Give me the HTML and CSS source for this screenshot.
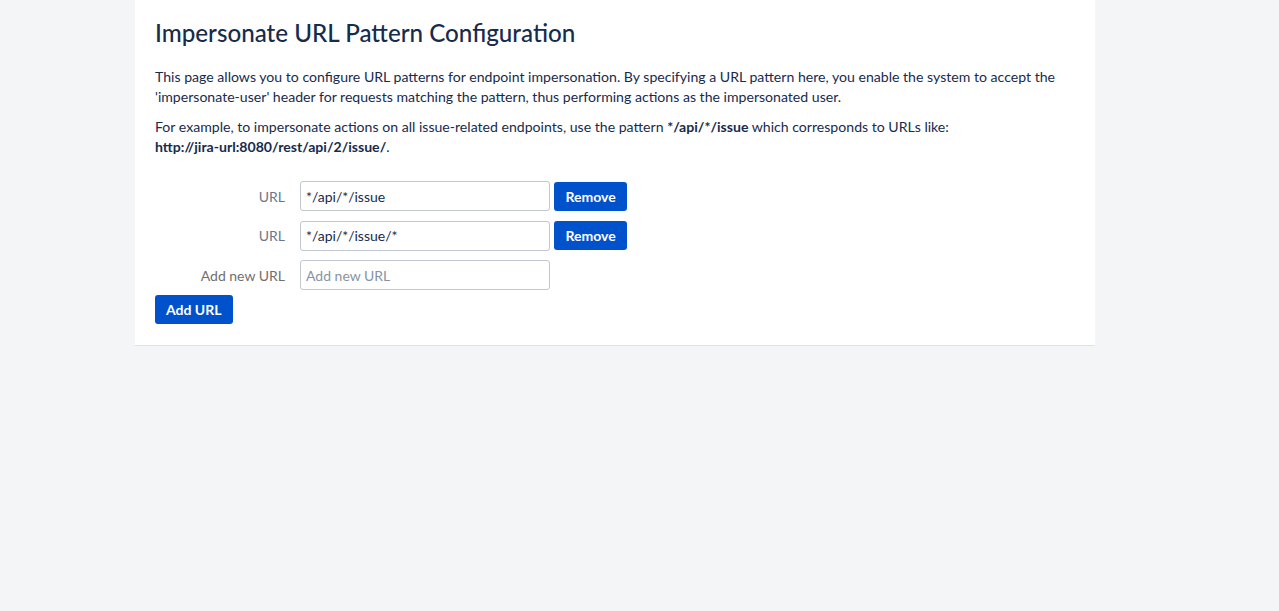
FILE: index.html
```html
<!DOCTYPE html>
<html lang="en">
<head>
<meta charset="utf-8">
<title>Impersonate URL Pattern Configuration</title>
<link rel="stylesheet" href="styles.css">
</head>
<body>
<div class="page">
  <main class="panel">
    <h1 class="title">Impersonate URL Pattern Configuration</h1>
    <p class="desc">This page allows you to configure URL patterns for endpoint impersonation. By specifying a URL pattern here, you enable the system to accept the 'impersonate-user' header for requests matching the pattern, thus performing actions as the impersonated user.</p>
    <p class="desc">For example, to impersonate actions on all issue-related endpoints, use the pattern <strong>*/api/*/issue</strong> which corresponds to URLs like: <strong class="nowrap">http://jira-url:8080/rest/api/2/issue/</strong>.</p>
    <form class="form">
      <div class="field-group">
        <label class="label label-url">URL</label>
        <input class="text" type="text" value="*/api/*/issue">
        <button type="button" class="btn">Remove</button>
      </div>
      <div class="field-group">
        <label class="label label-url">URL</label>
        <input class="text" type="text" value="*/api/*/issue/*">
        <button type="button" class="btn">Remove</button>
      </div>
      <div class="field-group">
        <label class="label label-new">Add new URL</label>
        <input class="text" type="text" placeholder="Add new URL">
      </div>
      <div class="actions">
        <button type="button" class="btn">Add URL</button>
      </div>
    </form>
  </main>
</div>
</body>
</html>
```
FILE: styles.css
```css
html, body {
  margin: 0;
  padding: 0;
  background: #f4f5f7;
  font-family: Lato, "Noto Sans", sans-serif;
  font-size: 14px;
  color: #172b4d;
}
.page {
  display: flex;
  padding-left: 135px;
}
.panel {
  width: 920px;
  background: #fff;
  padding: 16px 20px 21px;
  border-bottom: 1px solid #dfe1e6;
}
.title {
  margin: 0 0 17px;
  font-size: 24.2px;
  font-weight: 500;
  line-height: 34px;
  color: #172b4d;
}
.desc {
  margin: 0 0 10px;
  line-height: 20px;
  font-size: 14.1px;
}
.desc strong {
  font-weight: 700;
}
.nowrap {
  white-space: nowrap;
}
.form {
  margin-top: 24px;
  display: flex;
  flex-direction: column;
  gap: 9.5px;
}
.field-group {
  display: flex;
  align-items: center;
  gap: 4px;
}
.label {
  width: 130px;
  margin-right: 11px;
  text-align: right;
}
.label-url { color: #6b778c; }
.label-new { color: #707070; }
.text {
  box-sizing: border-box;
  width: 250px;
  height: 30px;
  padding: 4px 5px;
  border: 1px solid #c1c7d0;
  border-radius: 3px;
  font-family: inherit;
  font-size: 14px;
  color: #172b4d;
  background: #fff;
}
.text::placeholder { color: #8993a4; }
.btn {
  box-sizing: border-box;
  height: 29px;
  padding: 0 11.5px;
  border: 0;
  border-radius: 3px;
  background: #0052cc;
  color: #fff;
  font-family: inherit;
  font-size: 14px;
  font-weight: 700;
}
.actions {
  display: flex;
  margin-top: -5px;
}
.actions .btn {
  padding: 0 11px;
}
```
